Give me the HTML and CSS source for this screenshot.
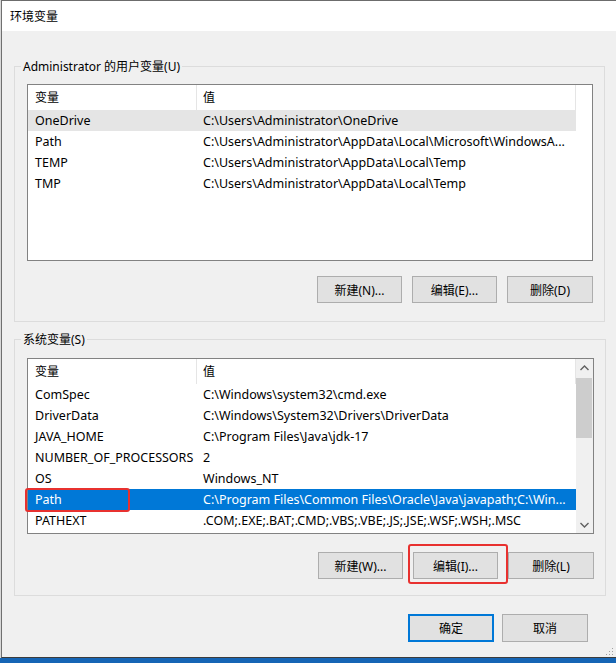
FILE: index.html
```html
<!DOCTYPE html>
<html lang="zh-CN">
<head>
<meta charset="utf-8">
<title>环境变量</title>
<link rel="stylesheet" href="styles.css">
</head>
<body>
<div class="desk">
  <div class="window">
    <div class="titlebar">
      <span class="title">环境变量</span>
      <svg class="close" width="11" height="11" viewBox="0 0 11 11"><path d="M0.5 0.5 L10.5 10.5 M10.5 0.5 L0.5 10.5" stroke="#000" stroke-width="1" fill="none"/></svg>
    </div>
    <div class="body">
      <fieldset class="group g1">
        <legend>Administrator 的用户变量(U)</legend>
        <div class="list l1">
          <div class="lv">
            <div class="hdr"><div class="c1">变量</div><div class="c2">值</div></div>
            <div class="row sel-gray"><div class="c1">OneDrive</div><div class="c2">C:\Users\Administrator\OneDrive</div></div>
            <div class="row"><div class="c1">Path</div><div class="c2">C:\Users\Administrator\AppData\Local\Microsoft\WindowsA...</div></div>
            <div class="row"><div class="c1">TEMP</div><div class="c2">C:\Users\Administrator\AppData\Local\Temp</div></div>
            <div class="row"><div class="c1">TMP</div><div class="c2">C:\Users\Administrator\AppData\Local\Temp</div></div>
          </div>
        </div>
        <div class="btns">
          <button class="btn">新建(N)...</button>
          <button class="btn">编辑(E)...</button>
          <button class="btn">删除(D)</button>
        </div>
      </fieldset>
      <fieldset class="group g2">
        <legend>系统变量(S)</legend>
        <div class="list l2">
          <div class="lv">
            <div class="hdr"><div class="c1">变量</div><div class="c2">值</div></div>
            <div class="row"><div class="c1">ComSpec</div><div class="c2">C:\Windows\system32\cmd.exe</div></div>
            <div class="row"><div class="c1">DriverData</div><div class="c2">C:\Windows\System32\Drivers\DriverData</div></div>
            <div class="row"><div class="c1">JAVA_HOME</div><div class="c2">C:\Program Files\Java\jdk-17</div></div>
            <div class="row"><div class="c1">NUMBER_OF_PROCESSORS</div><div class="c2">2</div></div>
            <div class="row"><div class="c1">OS</div><div class="c2">Windows_NT</div></div>
            <div class="row sel-blue"><div class="c1">Path</div><div class="c2">C:\Program Files\Common Files\Oracle\Java\javapath;C:\Win...</div></div>
            <div class="row"><div class="c1">PATHEXT</div><div class="c2">.COM;.EXE;.BAT;.CMD;.VBS;.VBE;.JS;.JSE;.WSF;.WSH;.MSC</div></div>
          </div>
          <div class="vscroll">
            <div class="arrow"><svg width="9" height="6" viewBox="0 0 9 6"><path d="M0.5 5 L4.5 1 L8.5 5" stroke="#606060" stroke-width="1.4" fill="none"/></svg></div>
            <div class="track"><div class="thumb"></div></div>
            <div class="arrow"><svg width="9" height="6" viewBox="0 0 9 6"><path d="M0.5 1 L4.5 5 L8.5 1" stroke="#606060" stroke-width="1.4" fill="none"/></svg></div>
          </div>
        </div>
        <div class="btns">
          <button class="btn">新建(W)...</button>
          <button class="btn">编辑(I)...</button>
          <button class="btn">删除(L)</button>
        </div>
      </fieldset>
      <div class="footer">
        <button class="btn default">确定</button>
        <button class="btn">取消</button>
      </div>
    </div>
  </div>
  <div class="annot a1"></div>
  <div class="annot a2"></div>
  <svg class="grip" width="9" height="9" viewBox="0 0 9 9">
    <rect x="7" y="1" width="1" height="1" fill="#a0a0a0"/>
    <rect x="4" y="4" width="1" height="1" fill="#a0a0a0"/>
    <rect x="7" y="4" width="1" height="1" fill="#a0a0a0"/>
    <rect x="1" y="7" width="1" height="1" fill="#a0a0a0"/>
    <rect x="4" y="7" width="1" height="1" fill="#a0a0a0"/>
    <rect x="7" y="7" width="1" height="1" fill="#a0a0a0"/>
  </svg>
</div>
</body>
</html>
```

FILE: styles.css
```css
html, body {
  margin: 0;
  padding: 0;
  overflow: hidden;
}
body {
  font-family: "Noto Sans", "Noto Sans CJK SC", sans-serif;
  font-size: 12px;
  color: #000;
  background: #1565b5;
}
.desk {
  position: relative;
  width: 616px;
  height: 663px;
  background: #1565b5;
  overflow: hidden;
}
.window {
  margin-left: 1px;
  width: 640px;
  height: 656px;
  border-left: 1px solid #707070;
  border-top: 1px solid #6c6c6c;
  border-bottom: 1px solid #3c3c3c;
  background: #f0f0f0;
  display: flex;
  flex-direction: column;
  box-shadow: -1px 0 0 #d8d8d8;
}
.titlebar {
  height: 30px;
  flex: 0 0 30px;
  background: #fff;
  display: flex;
  align-items: center;
  padding-left: 8px;
  width: 606px;
  padding-right: 26px;
}
.title {
  font-size: 12px;
  line-height: 30px;
  flex: 1;
  padding-top: 1px;
}
.close {
  margin-right: -20px;
}
.body {
  padding: 27px 0 0 12px;
}
.group {
  margin: 0;
  width: 566px;
  border: 1px solid #dcdcdc;
  padding: 9px 11px 18px 12px;
}
.group legend {
  padding: 0 2px;
  margin-left: -6px;
  line-height: 17px;
  height: 17px;
}
.g2 {
  margin-top: 9px;
  padding-top: 10px;
  padding-bottom: 16px;
}
.list {
  border: 1px solid #828282;
  background: #fff;
  display: flex;
  overflow: hidden;
}
.l1 {
  height: 175px;
}
.l2 {
  height: 174px;
}
.lv {
  width: 548px;
  flex: 0 0 548px;
}
.hdr, .row {
  display: flex;
  white-space: nowrap;
}
.hdr {
  height: 25px;
  line-height: 25px;
}
.row {
  height: 21px;
  line-height: 21px;
  font-size: 12.5px;
}
.c1 {
  width: 162px;
  flex: 0 0 162px;
  padding-left: 7px;
  overflow: hidden;
}
.c2 {
  width: 373px;
  flex: 0 0 373px;
  padding-left: 6px;
  overflow: hidden;
}
.hdr .c1 {
  width: 161px;
  flex-basis: 161px;
  border-right: 1px solid #e5e5e5;
}
.hdr .c2 {
  width: 372px;
  flex-basis: 372px;
  border-right: 1px solid #e5e5e5;
}
.sel-gray {
  background: #e5e5e5;
}
.sel-blue {
  background: #0078d7;
  color: #fff;
}
.vscroll {
  width: 17px;
  flex: 0 0 17px;
  background: #f0f0f0;
  display: flex;
  flex-direction: column;
}
.arrow {
  height: 17px;
  flex: 0 0 17px;
  display: flex;
  align-items: center;
  justify-content: center;
}
.track {
  flex: 1;
  padding: 2px 1px 0 0;
}
.thumb {
  height: 60px;
  background: #cdcdcd;
}
.btns {
  display: flex;
  justify-content: flex-end;
  gap: 10px;
  margin-top: 15px;
}
.g2 .btns {
  margin-top: 18px;
}
.btn {
  width: 85px;
  height: 27px;
  margin: 0;
  padding: 0;
  background: #e1e1e1;
  border: 1px solid #adadad;
  font-family: "Noto Sans", "Noto Sans CJK SC", sans-serif;
  font-size: 12px;
  color: #000;
  box-sizing: border-box;
}
.btns .btn:last-child {
  width: 86px;
}
.footer {
  width: 574px;
  margin-top: 18px;
  display: flex;
  justify-content: flex-end;
  gap: 8px;
}
.footer .btn {
  width: 86px;
  height: 28px;
}
.default {
  border: 2px solid #0078d7;
}
.annot {
  position: absolute;
  border: 2px solid #e8312f;
  border-radius: 3px;
  box-sizing: border-box;
}
.a1 {
  left: 25px;
  top: 488px;
  width: 105px;
  height: 24px;
}
.a2 {
  left: 408px;
  top: 544px;
  width: 100px;
  height: 40px;
}
.grip {
  position: absolute;
  left: 605px;
  top: 647px;
}
```
